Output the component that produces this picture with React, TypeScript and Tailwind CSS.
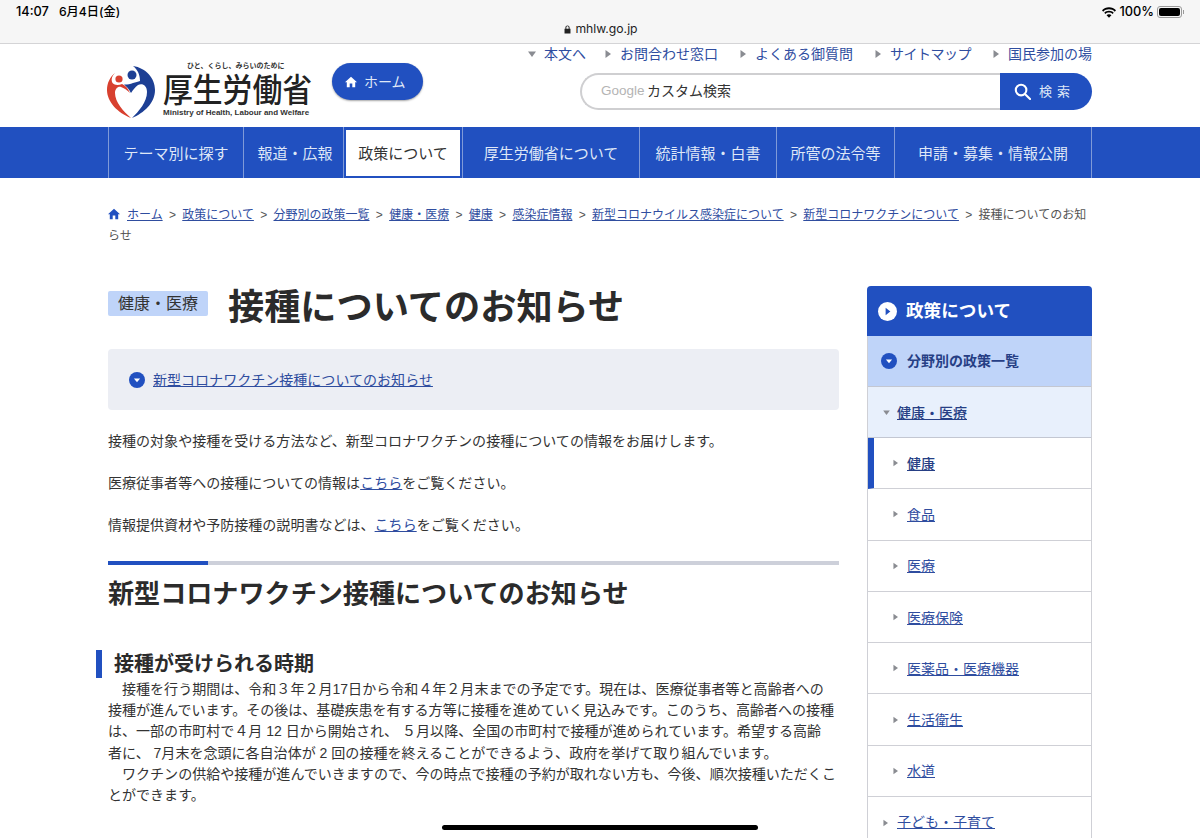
import React from "react"

const navItems = [
  { label: "テーマ別に探す", width: "w-[135px]" },
  { label: "報道・広報", width: "w-[100px] pl-[3px]" },
  { label: "政策について", width: "w-[119px]", active: true },
  { label: "厚生労働省について", width: "w-[177px]" },
  { label: "統計情報・白書", width: "w-[137px]" },
  { label: "所管の法令等", width: "w-[118px]" },
  { label: "申請・募集・情報公開", width: "w-[197px]" },
]

const topLinks = ["お問合わせ窓口", "よくある御質問", "サイトマップ", "国民参加の場"]

const crumbs = [
  "政策について",
  "分野別の政策一覧",
  "健康・医療",
  "健康",
  "感染症情報",
  "新型コロナウイルス感染症について",
  "新型コロナワクチンについて",
]

const subItems = ["健康", "食品", "医療", "医療保険", "医薬品・医療機器", "生活衛生", "水道"]

const bodyLines = [
  "\u3000接種を行う期間は、令和３年２月17日から令和４年２月末までの予定です。現在は、医療従事者等と高齢者への",
  "接種が進んでいます。その後は、基礎疾患を有する方等に接種を進めていく見込みです。このうち、高齢者への接種",
  "は、一部の市町村で４月 12 日から開始され、 ５月以降、全国の市町村で接種が進められています。希望する高齢",
  "者に、 7月末を念頭に各自治体が 2 回の接種を終えることができるよう、政府を挙げて取り組んでいます。",
  "\u3000ワクチンの供給や接種が進んでいきますので、今の時点で接種の予約が取れない方も、今後、順次接種いただくこ",
  "とができます。",
]

function TriRight({ className }: { className?: string }) {
  return (
    <svg viewBox="0 0 6 8" className={className} fill="#8a8c92">
      <path d="M0.5 0 L6 4 L0.5 8 Z" />
    </svg>
  )
}

function TriDown({ className }: { className?: string }) {
  return (
    <svg viewBox="0 0 8 6" className={className} fill="#8a8c92">
      <path d="M0 0.5 L8 0.5 L4 6 Z" />
    </svg>
  )
}

function CircleDown({ className }: { className?: string }) {
  return (
    <svg viewBox="0 0 16 16" className={className}>
      <circle cx="8" cy="8" r="8" fill="#2150c0" />
      <path d="M4.9 6.4 H11.1 L8 10.3 Z" fill="#fff" />
    </svg>
  )
}

function HomeIcon({ className, color }: { className?: string; color: string }) {
  return (
    <svg viewBox="0 0 12 12" className={className} fill={color}>
      <path d="M6 0.8 L12 6.2 H10.2 V11.2 H7.3 V7.6 H4.7 V11.2 H1.8 V6.2 H0 Z" />
    </svg>
  )
}

function LogoMark() {
  return (
    <svg viewBox="0 0 48 53" className="w-[48px] h-[53px] shrink-0">
      <path
        d="M26 1 C39 3 48 13 48 25 C48 38 37 48 25 53 C32 46 40 37 40 27 C40 20 35 18 31 20 C28 22 26 25 24 28 C22 24 19 21 17 19.5 C22 20 29 17 33 16 C33 10 31 5 26 1 Z"
        fill="#1d3f94"
      />
      <circle cx="25" cy="10" r="4.5" fill="#1d3f94" />
      <path
        d="M8 8 C3 12 0 18 0 25 C0 37 11 48 24 53 C16 46 8 37 8 28 C8 24 11 21 14 22 C17 23 20 25 23 28 C21 23 18 20 15 19 C11 21 6 20 5 17 C4 14 5 11 8 8 Z"
        fill="#d8402f"
      />
      <circle cx="12" cy="14" r="3.6" fill="#d8402f" />
    </svg>
  )
}

function StatusBar() {
  return (
    <div className="h-[44px] bg-[#f6f6f6] border-b border-[#d4d4d6] font-['Inter','Noto_Sans_CJK_JP',sans-serif] text-black">
      <div className="flex justify-between items-center h-[24px] pl-[16px] pr-[16px] text-[12.8px] font-medium">
        <div className="flex items-center gap-[10px]">
          <span>14:07</span>
          <span className="text-[12.2px]">6月4日(金)</span>
        </div>
        <div className="flex items-center gap-[3px]">
          <svg viewBox="0 0 16 12" className="w-[14px] h-[11px]" fill="#000">
            <path d="M8 2.4 C10.6 2.4 12.9 3.4 14.6 5 L16 3.5 C13.9 1.4 11.1 0 8 0 C4.9 0 2.1 1.4 0 3.5 L1.4 5 C3.1 3.4 5.4 2.4 8 2.4 Z" />
            <path d="M8 6 C9.6 6 11 6.6 12.1 7.6 L13.4 6.2 C12 4.9 10.1 4.1 8 4.1 C5.9 4.1 4 4.9 2.6 6.2 L3.9 7.6 C5 6.6 6.4 6 8 6 Z" />
            <path d="M8 7.9 C6.9 7.9 5.9 8.3 5.2 9 L8 12 L10.8 9 C10.1 8.3 9.1 7.9 8 7.9 Z" />
          </svg>
          <span>100%</span>
          <div className="flex items-center">
            <div className="w-[25px] h-[12px] rounded-[3px] border border-[#9a9a9a] p-[1px]">
              <div className="w-full h-full rounded-[2px] bg-black" />
            </div>
            <div className="w-[1px] h-[4px] bg-[#9a9a9a] ml-[1px]" />
          </div>
        </div>
      </div>
      <div className="-mt-[3px] pl-[2px] flex justify-center items-center gap-[4px] text-[12.2px] leading-[16px] text-[#222]">
        <svg viewBox="0 0 8 10" className="w-[7px] h-[9px]" fill="#222">
          <path d="M1.6 4 V2.8 C1.6 1.3 2.7 0.3 4 0.3 C5.3 0.3 6.4 1.3 6.4 2.8 V4 H7.4 V9.6 H0.6 V4 Z M2.7 4 H5.3 V2.8 C5.3 1.9 4.7 1.3 4 1.3 C3.3 1.3 2.7 1.9 2.7 2.8 Z" />
        </svg>
        <span>mhlw.go.jp</span>
      </div>
    </div>
  )
}

function Header() {
  return (
    <div className="h-[83px] pl-[107px] pr-[108px] flex justify-between">
      <div className="flex">
        <div className="mt-[21px]">
          <LogoMark />
        </div>
        <div className="ml-[8px] w-[150px] flex flex-col items-start">
          <div className="mt-[16px] ml-[24px] text-[7px] leading-[12px] font-bold text-[#333] whitespace-nowrap">
            ひと、くらし、みらいのために
          </div>
          <div className="mt-[1px] text-[29.8px] leading-[36px] font-medium text-[#222] whitespace-nowrap scale-y-110">
            厚生労働省
          </div>
          <div className="-mt-[1px] text-[8px] leading-[10px] font-bold text-[#333] whitespace-nowrap">
            Ministry of Health, Labour and Welfare
          </div>
        </div>
        <div className="ml-[19px] mt-[19px] w-[91px] h-[37px] rounded-full bg-[#2150c0] shadow-[0_1px_2px_rgba(0,0,0,0.35)] flex items-center pl-[13px] gap-[7px]">
          <HomeIcon className="w-[12px] h-[12px]" color="#fff" />
          <span className="pt-[2px] text-[14px] text-[#dfe7f7]">ホーム</span>
        </div>
      </div>
      <div className="flex flex-col items-end">
        <div className="flex items-center h-[20px] text-[14px] leading-[20px] text-[#2f4d9f]">
          <TriDown className="w-[8px] h-[6px] mr-[8px]" />
          <span>本文へ</span>
          {topLinks.map((t, i) => (
            <div key={t} className={`flex items-center ${i === 0 ? "ml-[19px]" : "ml-[22px]"}`}>
              <TriRight className="w-[6px] h-[8px] mr-[9px]" />
              <span className={t === "サイトマップ" ? "tracking-[-0.5px]" : ""}>{t}</span>
            </div>
          ))}
        </div>
        <div className="flex mt-[9px] h-[37px] w-[512px]">
          <div className="flex-1 flex items-center rounded-l-full border-2 border-r-0 border-[#cfcfd1] pl-[19px] bg-white">
            <span className="text-[13.5px] text-[#b4b4b4] font-['Liberation_Sans',sans-serif] w-[46px]">Google</span>
            <span className="text-[14px] text-[#333]">カスタム検索</span>
          </div>
          <div className="w-[92px] bg-[#2150c0] rounded-r-full flex items-center pl-[14px] gap-[8px]">
            <svg viewBox="0 0 18 18" className="w-[17px] h-[17px]" fill="none" stroke="#fff" strokeWidth="2.2">
              <circle cx="7.5" cy="7.5" r="5.6" />
              <path d="M11.8 11.8 L17 17" strokeLinecap="round" />
            </svg>
            <span className="text-[13px] tracking-[5px] text-[#dfe7f7]">検索</span>
          </div>
        </div>
      </div>
    </div>
  )
}

function GlobalNav() {
  return (
    <div className="h-[51px] bg-[#2150c0] pl-[108px] flex">
      <div className="flex border-l border-[#7f9ad8]">
        {navItems.map((item) => (
          <div key={item.label} className={`${item.width} border-r border-[#7f9ad8] flex items-center justify-center`}>
            {item.active ? (
              <div className="w-[114px] h-[46px] bg-white flex items-center justify-center pt-[3px] text-[15px] text-[#333]">
                {item.label}
              </div>
            ) : (
              <span className="pt-[3px] text-[15px] text-[#dfe7f7]">{item.label}</span>
            )}
          </div>
        ))}
      </div>
    </div>
  )
}

function Breadcrumb() {
  return (
    <div className="mx-[108px] pt-[27px] text-[12px] leading-[21px] text-[#555]">
      <HomeIcon className="inline-block w-[12px] h-[12px] mr-[7px] align-[-1px]" color="#2150c0" />
      <a className="underline text-[#2f4d9f]">ホーム</a>
      {crumbs.map((c) => (
        <React.Fragment key={c}>
          <span className="mx-[6.3px] font-['Liberation_Sans',sans-serif]">&gt;</span>
          <a className="underline text-[#2f4d9f]">{c}</a>
        </React.Fragment>
      ))}
      <span className="mx-[6.3px] font-['Liberation_Sans',sans-serif]">&gt;</span>
      <span>接種についてのお知</span>
      <span>らせ</span>
    </div>
  )
}

function MainColumn() {
  return (
    <div className="w-[731px] text-[14.04px] leading-[21px] text-[#333]">
      <div className="flex items-start h-[42px]">
        <div className="mt-[5px] w-[100px] h-[25px] rounded-[2px] bg-[#bfd4f9] flex items-center justify-center text-[16px] text-[#333]">
          健康・医療
        </div>
        <h1 className="ml-[20px] pt-[1px] text-[36.2px] leading-[42px] font-bold text-[#2b2b2b]">接種についてのお知らせ</h1>
      </div>
      <div className="mt-[21px] h-[61px] rounded-[4px] bg-[#eceef4] flex items-center pl-[21px] gap-[8px]">
        <CircleDown className="w-[16px] h-[16px]" />
        <a className="pt-[1px] underline text-[#2f4d9f]">新型コロナワクチン接種についてのお知らせ</a>
      </div>
      <p className="mt-[21px]">接種の対象や接種を受ける方法など、新型コロナワクチンの接種についての情報をお届けします。</p>
      <p className="mt-[21px]">
        医療従事者等への接種についての情報は<a className="underline text-[#2f4d9f]">こちら</a>をご覧ください。
      </p>
      <p className="mt-[21px]">
        情報提供資材や予防接種の説明書などは、<a className="underline text-[#2f4d9f]">こちら</a>をご覧ください。
      </p>
      <div className="mt-[25px] h-[4px] bg-[#cdd0da]">
        <div className="w-[100px] h-full bg-[#2150c0]" />
      </div>
      <h2 className="mt-[9px] text-[26.1px] leading-[40px] font-bold text-[#2b2b2b]">
        新型コロナワクチン接種についてのお知らせ
      </h2>
      <h3 className="mt-[36px] -ml-[12px] h-[28px] border-l-[6px] border-[#2150c0] pl-[12px] text-[20px] leading-[29px] font-bold text-[#2b2b2b]">
        接種が受けられる時期
      </h3>
      <div className="pt-[1px] leading-[21.2px]">
        {bodyLines.map((line) => (
          <p key={line} className="whitespace-nowrap">
            {line}
          </p>
        ))}
      </div>
    </div>
  )
}

function SideNav() {
  return (
    <div className="w-[225px] text-[14px]">
      <div className="h-[50px] rounded-t-[4px] bg-[#2150c0] flex items-center pl-[11px] gap-[9px]">
        <svg viewBox="0 0 20 20" className="w-[19px] h-[19px]">
          <circle cx="10" cy="10" r="10" fill="#fff" />
          <path d="M8 6 L13 10 L8 14 Z" fill="#2150c0" />
        </svg>
        <span className="text-[17.6px] font-bold text-white">政策について</span>
      </div>
      <div className="border-x border-[#cfd0d6]">
        <div className="h-[51px] bg-[#bfd4f9] border-b border-[#c3c7d2] flex items-center pl-[13px] gap-[10px]">
          <CircleDown className="w-[16px] h-[16px]" />
          <span className="font-bold text-[#263f85]">分野別の政策一覧</span>
        </div>
        <div className="h-[51px] bg-[#e8f0fc] border-b border-[#c3c7d2] flex items-center pl-[15px] gap-[7px]">
          <TriDown className="w-[7px] h-[5px]" />
          <a className="pt-[2px] underline font-medium text-[#263f85]">健康・医療</a>
        </div>
        {subItems.map((item, i) => (
          <div
            key={item}
            className={`h-[51.3px] border-b border-[#cfd0d6] flex items-center ${i === 0 ? "border-l-[6px] border-l-[#2150c0] pl-[19px]" : "pl-[25px]"} gap-[9px]`}
          >
            <TriRight className="w-[5px] h-[8px]" />
            <a className={`pt-[2px] underline ${i === 0 ? "font-medium text-[#263f85]" : "text-[#2f4d9f]"}`}>{item}</a>
          </div>
        ))}
        <div className="h-[51px] flex items-center pl-[15px] gap-[9px]">
          <TriRight className="w-[5px] h-[8px]" />
          <a className="underline text-[#2f4d9f]">子ども・子育て</a>
        </div>
      </div>
    </div>
  )
}

export default function App() {
  return (
    <div className="relative h-[838px] overflow-hidden bg-white font-['Liberation_Sans','Noto_Sans_CJK_JP',sans-serif]">
      <StatusBar />
      <Header />
      <GlobalNav />
      <Breadcrumb />
      <div className="mt-[39px] mx-[108px] flex justify-between">
        <MainColumn />
        <SideNav />
      </div>
      <div className="absolute left-[442px] bottom-[8px] w-[316px] h-[5px] rounded-full bg-black" />
    </div>
  )
}
